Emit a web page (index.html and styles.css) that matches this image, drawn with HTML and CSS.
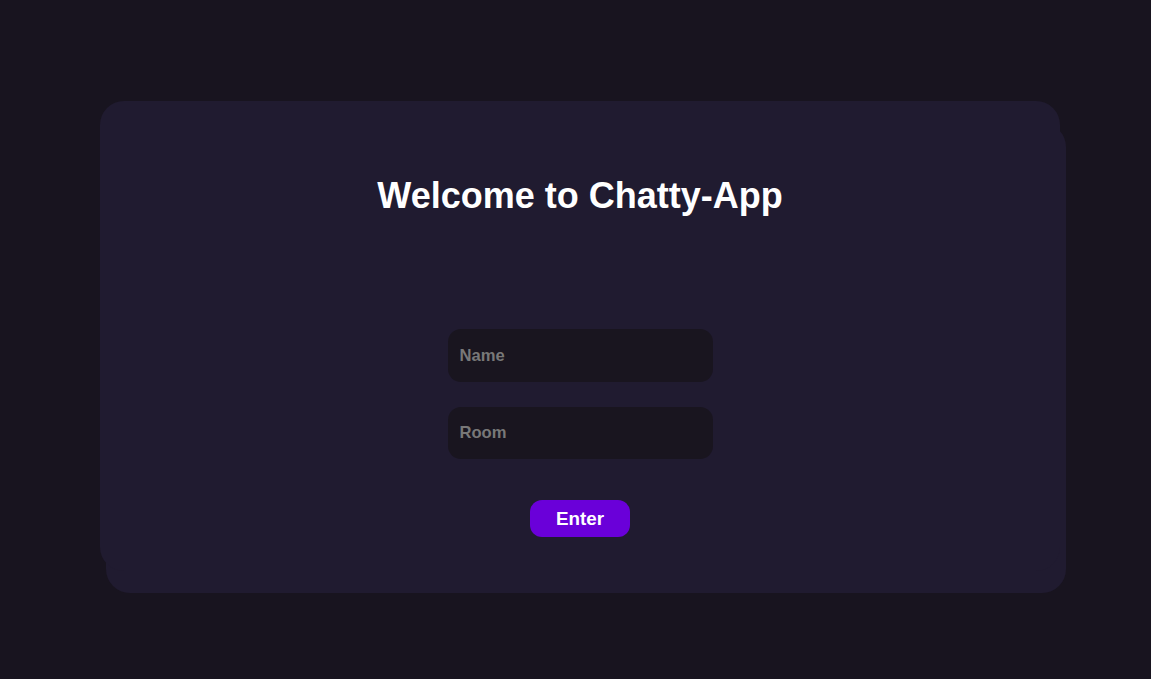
FILE: index.html
```html
<!DOCTYPE html>
<html>
<head>
<meta charset="utf-8">
<link rel="stylesheet" href="styles.css">
</head>
<body>
<main class="page">
  <section class="card">
    <h1 class="title">Welcome to Chatty-App</h1>
    <form class="join-form">
      <input class="field" type="text" placeholder="Name">
      <input class="field" type="text" placeholder="Room">
      <button class="enter-btn" type="button">Enter</button>
    </form>
  </section>
</main>
</body>
</html>
```
FILE: styles.css
```css
html, body {
  margin: 0;
  padding: 0;
  background: #18141f;
  font-family: "Liberation Sans", Arial, sans-serif;
}
.page {
  min-height: 100vh;
  box-sizing: border-box;
  padding: 101px 0 0 100px;
}
.card {
  width: 960px;
  height: 470px;
  box-sizing: border-box;
  background: #201b30;
  border-radius: 24px;
  box-shadow: 6px 22px 0 #201b30;
  padding-top: 74px;
  display: flex;
  flex-direction: column;
  align-items: center;
}
.title {
  margin: 0;
  color: #ffffff;
  font-size: 36px;
  font-weight: 700;
  line-height: 41px;
}
.join-form {
  margin-top: 113px;
  display: flex;
  flex-direction: column;
  align-items: center;
}
.field {
  width: 265px;
  height: 53px;
  box-sizing: border-box;
  border: none;
  outline: none;
  border-radius: 13px;
  background: #19151f;
  padding: 0 12px;
  font-family: "Liberation Sans", Arial, sans-serif;
  font-size: 16.6px;
  font-weight: 700;
  color: #ffffff;
  margin-bottom: 25px;
}
.field + .field {
  height: 52px;
  margin-bottom: 41px;
}
.field::placeholder {
  color: #787878;
}
.enter-btn {
  width: 100px;
  height: 37px;
  border: none;
  border-radius: 12px;
  background: #6a00d9;
  color: #ffffff;
  font-family: "Liberation Sans", Arial, sans-serif;
  font-size: 18.8px;
  font-weight: 700;
  cursor: pointer;
}
```
